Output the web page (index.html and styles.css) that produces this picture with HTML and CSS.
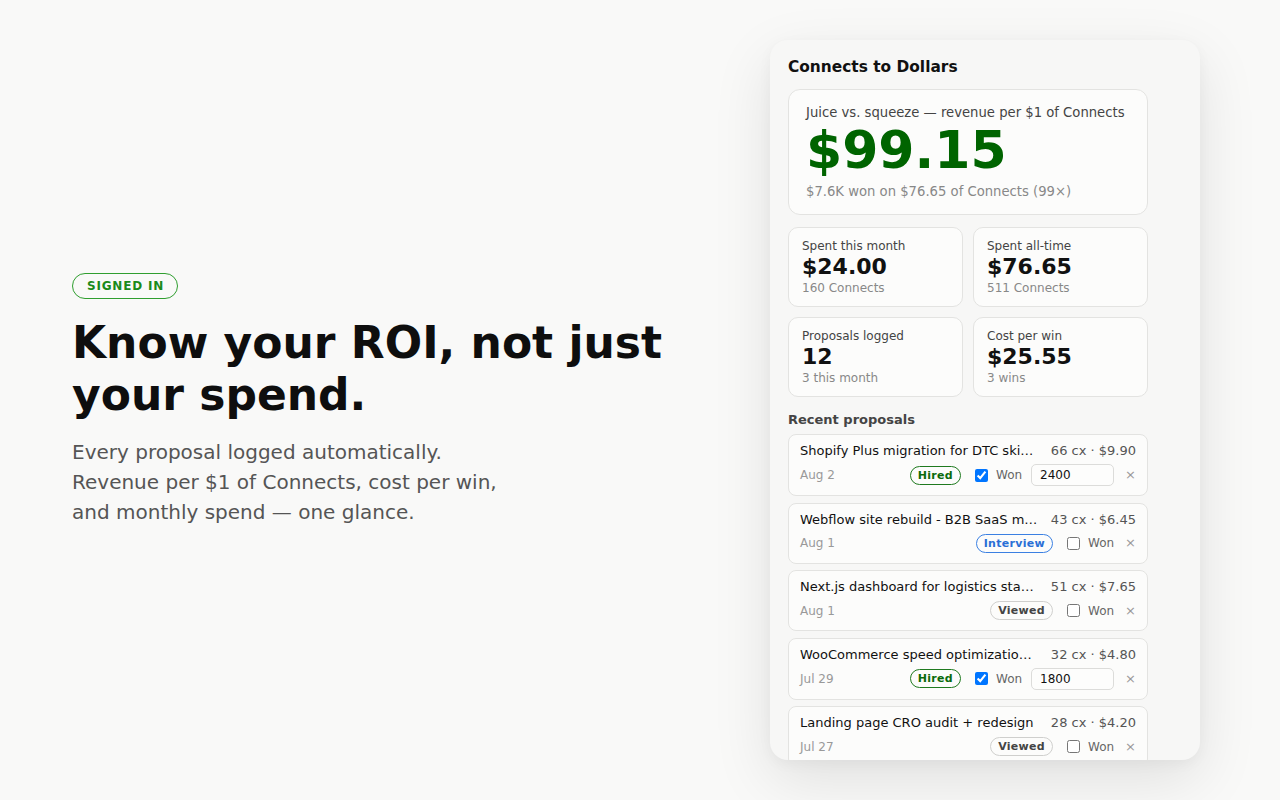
FILE: index.html
```html
<!DOCTYPE html>
<html lang="en">
<head>
<meta charset="utf-8">
<title>Connects to Dollars</title>
<link rel="stylesheet" href="styles.css">
</head>
<body>
<main class="page">
  <section class="intro">
    <span class="pill">SIGNED IN</span>
    <h1 class="headline">Know your ROI, not just your spend.</h1>
    <p class="lede">Every proposal logged automatically. Revenue per $1 of Connects, cost per win, and monthly spend — one glance.</p>
  </section>

  <aside class="panel">
    <div class="panel-inner">
      <h2 class="panel-title">Connects to Dollars</h2>

      <div class="hero card">
        <div class="hero-label">Juice vs. squeeze — revenue per $1 of Connects</div>
        <div class="hero-value">$99.15</div>
        <div class="hero-sub">$7.6K won on $76.65 of Connects (99×)</div>
      </div>

      <div class="stats">
        <div class="stat card">
          <div class="stat-label">Spent this month</div>
          <div class="stat-value">$24.00</div>
          <div class="stat-sub">160 Connects</div>
        </div>
        <div class="stat card">
          <div class="stat-label">Spent all-time</div>
          <div class="stat-value">$76.65</div>
          <div class="stat-sub">511 Connects</div>
        </div>
        <div class="stat card">
          <div class="stat-label">Proposals logged</div>
          <div class="stat-value">12</div>
          <div class="stat-sub">3 this month</div>
        </div>
        <div class="stat card">
          <div class="stat-label">Cost per win</div>
          <div class="stat-value">$25.55</div>
          <div class="stat-sub">3 wins</div>
        </div>
      </div>

      <h3 class="section-title">Recent proposals</h3>

      <ul class="rows">
        <li class="row card">
          <div class="row-top">
            <span class="row-title">Shopify Plus migration for DTC skincare brand</span>
            <span class="row-cost">66 cx · $9.90</span>
          </div>
          <div class="row-bottom">
            <span class="row-date">Aug 2</span>
            <div class="row-actions">
              <span class="badge badge-hired">Hired</span>
              <input class="won-check" type="checkbox" checked>
              <span class="won-label">Won</span>
              <input class="won-amount" type="text" value="2400">
              <span class="row-remove">×</span>
            </div>
          </div>
        </li>
        <li class="row card">
          <div class="row-top">
            <span class="row-title">Webflow site rebuild - B2B SaaS marketing site</span>
            <span class="row-cost">43 cx · $6.45</span>
          </div>
          <div class="row-bottom">
            <span class="row-date">Aug 1</span>
            <div class="row-actions">
              <span class="badge badge-interview">Interview</span>
              <input class="won-check" type="checkbox">
              <span class="won-label">Won</span>
              <span class="row-remove">×</span>
            </div>
          </div>
        </li>
        <li class="row card">
          <div class="row-top">
            <span class="row-title">Next.js dashboard for logistics startup</span>
            <span class="row-cost">51 cx · $7.65</span>
          </div>
          <div class="row-bottom">
            <span class="row-date">Aug 1</span>
            <div class="row-actions">
              <span class="badge badge-viewed">Viewed</span>
              <input class="won-check" type="checkbox">
              <span class="won-label">Won</span>
              <span class="row-remove">×</span>
            </div>
          </div>
        </li>
        <li class="row card">
          <div class="row-top">
            <span class="row-title">WooCommerce speed optimization and audit</span>
            <span class="row-cost">32 cx · $4.80</span>
          </div>
          <div class="row-bottom">
            <span class="row-date">Jul 29</span>
            <div class="row-actions">
              <span class="badge badge-hired">Hired</span>
              <input class="won-check" type="checkbox" checked>
              <span class="won-label">Won</span>
              <input class="won-amount" type="text" value="1800">
              <span class="row-remove">×</span>
            </div>
          </div>
        </li>
        <li class="row card">
          <div class="row-top">
            <span class="row-title">Landing page CRO audit + redesign</span>
            <span class="row-cost">28 cx · $4.20</span>
          </div>
          <div class="row-bottom">
            <span class="row-date">Jul 27</span>
            <div class="row-actions">
              <span class="badge badge-viewed">Viewed</span>
              <input class="won-check" type="checkbox">
              <span class="won-label">Won</span>
              <span class="row-remove">×</span>
            </div>
          </div>
        </li>
      </ul>
    </div>
  </aside>
</main>
</body>
</html>
```

FILE: styles.css
```css
* { box-sizing: border-box; }

html, body {
  margin: 0;
  padding: 0;
  background: #f9f9f8;
  font-family: "DejaVu Sans", "Liberation Sans", sans-serif;
  color: #111;
}

.page {
  height: 800px;
  display: flex;
  align-items: center;
  justify-content: space-between;
  padding: 0 80px 0 72px;
}

/* ---------- left intro ---------- */
.intro {
  display: flex;
  flex-direction: column;
  align-items: flex-start;
}

.pill {
  display: inline-block;
  font-size: 12px;
  line-height: 16px;
  font-weight: 700;
  letter-spacing: 0.8px;
  color: #1a8a1a;
  border: 1px solid #2f9e2f;
  border-radius: 999px;
  padding: 4px 13px 4px 14px;
}

.headline {
  margin: 18px 0 0;
  max-width: 640px;
  font-size: 44px;
  line-height: 52px;
  font-weight: 700;
  color: #0e0e0e;
}

.lede {
  margin: 16px 0 0;
  max-width: 440px;
  font-size: 20px;
  line-height: 30px;
  color: #555;
}

/* ---------- panel ---------- */
.panel {
  width: 430px;
  height: 720px;
  background: #f7f7f6;
  border-radius: 18px;
  box-shadow: 0 20px 60px rgba(0, 0, 0, 0.10), 0 4px 14px rgba(0, 0, 0, 0.04);
  overflow: hidden;
  padding: 17px 18px;
}

.panel-inner {
  width: 360px;
}

.panel-title {
  margin: 0 0 12px;
  font-size: 15.4px;
  line-height: 20px;
  font-weight: 700;
  color: #111;
}

.card {
  background: #fcfcfb;
  border: 1px solid #e3e3e1;
}

.hero {
  border-radius: 12px;
  padding: 14px 17px 13px;
}

.hero-label {
  font-size: 13.2px;
  line-height: 18px;
  color: #444;
}

.hero-value {
  font-size: 52px;
  line-height: 57px;
  font-weight: 700;
  color: #006400;
}

.hero-sub {
  margin-top: 4px;
  font-size: 13.2px;
  line-height: 18px;
  color: #888;
}

.stats {
  margin-top: 12px;
  display: grid;
  grid-template-columns: 1fr 1fr;
  gap: 10px;
}

.stat {
  border-radius: 10px;
  padding: 10px 13px;
}

.stat-label {
  font-size: 12px;
  line-height: 16px;
  color: #444;
}

.stat-value {
  font-size: 22px;
  line-height: 26px;
  font-weight: 700;
  color: #111;
}

.stat-sub {
  font-size: 12px;
  line-height: 16px;
  color: #888;
}

.section-title {
  margin: 14px 0 6px;
  font-size: 13px;
  line-height: 17px;
  font-weight: 700;
  color: #444;
}

.rows {
  list-style: none;
  margin: 0;
  padding: 0;
  display: flex;
  flex-direction: column;
  gap: 6.5px;
}

.row {
  border-radius: 8px;
  padding: 8px 11px 9px;
}

.row-top {
  display: flex;
  align-items: center;
  gap: 13px;
  font-size: 13px;
  line-height: 16px;
}

.row-title {
  flex: 1;
  min-width: 0;
  white-space: nowrap;
  overflow: hidden;
  text-overflow: ellipsis;
  color: #111;
}

.row-cost {
  flex-shrink: 0;
  color: #555;
}

.row-bottom {
  margin-top: 5px;
  min-height: 21px;
  display: flex;
  align-items: center;
  justify-content: space-between;
}

.row-date {
  font-size: 12px;
  color: #999;
}

.row-actions {
  display: flex;
  align-items: center;
  gap: 8px;
}

.badge {
  font-size: 11px;
  line-height: 15px;
  font-weight: 700;
  letter-spacing: 0.3px;
  padding: 1px 7px;
  border-radius: 999px;
  border: 1px solid;
  margin-right: 6px;
}

.badge-hired {
  color: #0b6b0b;
  border-color: #1f7a1f;
}

.badge-interview {
  color: #2a6fd6;
  border-color: #3b80e2;
}

.badge-viewed {
  color: #444;
  border-color: #cfcfcd;
}

.won-check {
  width: 13px;
  height: 13px;
  margin: 0;
}

.won-label {
  font-size: 12px;
  color: #666;
}

.won-amount {
  width: 83px;
  height: 22px;
  margin: 0 0 0 1px;
  padding: 0 8px;
  border: 1px solid #dcdcda;
  border-radius: 5px;
  background: #fdfdfc;
  font-family: "DejaVu Sans", "Liberation Sans", sans-serif;
  font-size: 12px;
  color: #111;
}

.row-remove {
  margin-left: 3px;
  font-size: 13px;
  line-height: 16px;
  color: #999;
}
```
